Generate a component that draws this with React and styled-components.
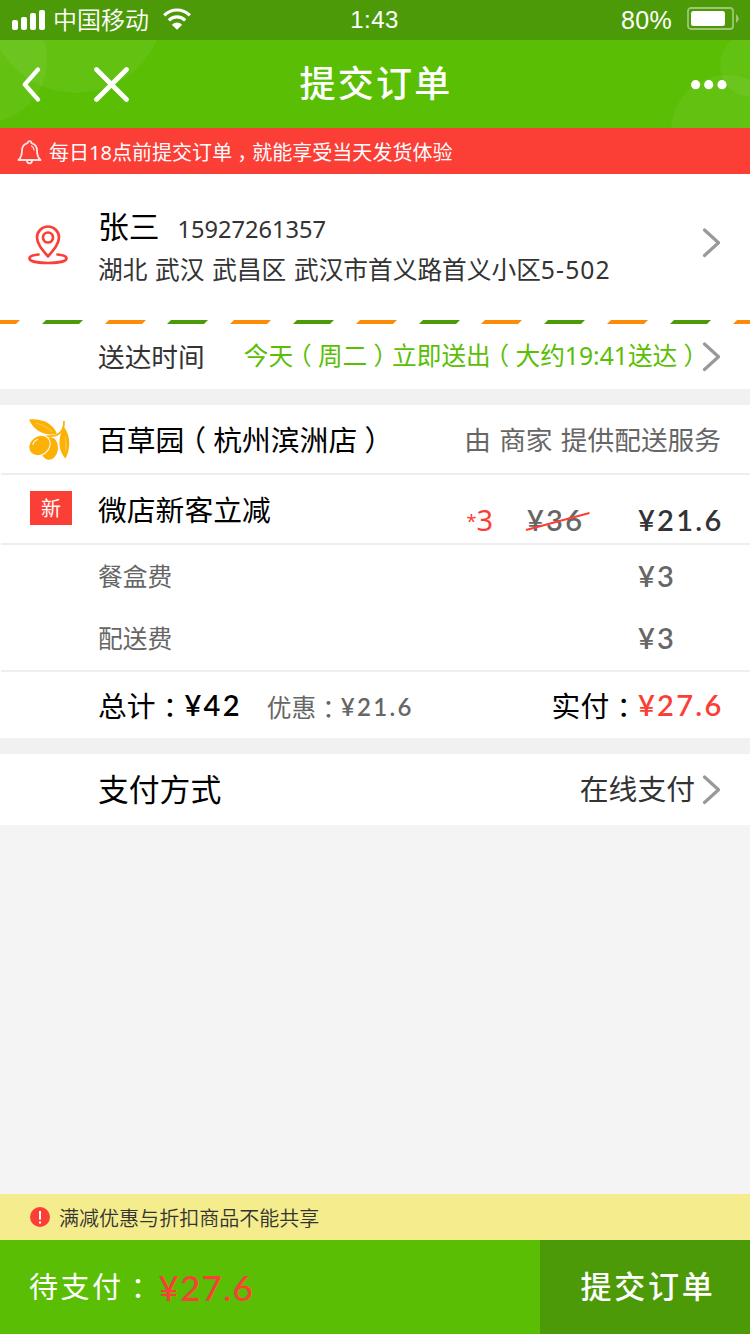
import React from 'react';
import styled, { createGlobalStyle } from 'styled-components';

const GlobalStyle = createGlobalStyle`
  * { box-sizing: border-box; }
  body { margin: 0; background: #f4f4f4; }
`;

const Page = styled.div`
  width: 750px;
  height: 1334px;
  display: flex;
  flex-direction: column;
  background: #f4f4f4;
  color: #333;
  font-family: "Noto Sans", "Noto Sans CJK SC", sans-serif;
  line-height: 1;
  white-space: nowrap;
  overflow: hidden;
`;

const StatusBar = styled.div`
  height: 40px;
  flex: none;
  display: grid;
  grid-template-columns: 1fr auto 1fr;
  align-items: center;
  padding: 0 10px 0 12px;
  background: #4d9a09;
  color: #fff;
`;
const Carrier = styled.div`
  display: flex;
  align-items: center;
  font-size: 24px;
  font-weight: 350;
  svg:first-child { margin-right: 8px; }
  svg:last-child { margin: 0 0 2px 14px; }
`;
const Clock = styled.div`
  margin-right: 3px;
  font: 24px/1 "Liberation Sans", sans-serif;
  letter-spacing: 0.4px;
`;
const BatteryInfo = styled.div`
  display: flex;
  justify-content: flex-end;
  align-items: center;
  font: 25px/1 "Liberation Sans", sans-serif;
  letter-spacing: 0.3px;
  span { padding-top: 1px; }
  svg { margin: 0 0 3px 15px; }
`;

const Header = styled.header`
  position: relative;
  height: 88px;
  flex: none;
  display: grid;
  grid-template-columns: 1fr auto 1fr;
  align-items: center;
  padding: 1px 23px 0 22px;
  background: #5abe04;
`;
const Bubbles = styled.svg`
  position: absolute;
  inset: 0;
`;
const NavIcons = styled.div`
  display: flex;
  align-items: center;
  gap: 53px;
`;
const Title = styled.h1`
  margin: 0;
  padding: 0 0 1px 3px;
  color: #fff;
  font-size: 36px;
  font-weight: 500;
  letter-spacing: 2.3px;
`;
const More = styled.svg`
  justify-self: end;
`;

const Notice = styled.div`
  height: 46px;
  flex: none;
  display: flex;
  align-items: center;
  gap: 7px;
  padding: 2px 17px 0;
  background: #fb3e36;
  color: #fff;
  font-size: 20.05px;
  span { padding-top: 1px; }
`;

/* Full-width punctuation set in the middle of its em square */
const Mark = styled.span`
  display: inline-block;
  width: 1em;
  letter-spacing: 0;
  text-align: center;
  font-feature-settings: "halt";
`;

const AddressCard = styled.section`
  height: 146px;
  flex: none;
  display: flex;
  align-items: center;
  padding: 0 29px 8px 28px;
  background: #fff;
`;
const PinIcon = styled.svg`
  margin-top: 4px;
`;
const AddressText = styled.div`
  flex: 1;
  padding: 7px 0 0 30px;
`;
const Recipient = styled.div`
  display: flex;
  align-items: baseline;
  gap: 18px;
  color: #000;
  font-size: 30.8px;
`;
const Phone = styled.span`
  color: #333;
  font-size: 23.6px;
`;
const Address = styled.div`
  margin-top: 16px;
  font-size: 24.7px;
  word-spacing: 1.3px;
`;
const Unit = styled.span`
  letter-spacing: 1.1px;
`;

const Stripes = styled.div`
  height: 4px;
  flex: none;
  display: flex;
  gap: 25.5px;
  background: #fff;
  overflow: hidden;
`;
const Dash = styled.i`
  flex: none;
  width: 37.3px;
  background: ${(p) => (p.$green ? '#4d9a09' : '#fb8b08')};
  transform: skewX(-45deg);
  &:first-child { margin-left: -19px; }
`;

const Row = styled.div`
  height: ${(p) => p.$h}px;
  flex: none;
  display: flex;
  align-items: center;
  padding: ${(p) => p.$top || 0}px 29px 0 98px;
  background: #fff;
`;
const Card = styled.section`
  flex: none;
  display: flex;
  flex-direction: column;
  background: #fff;
`;
const Gap = styled.div`
  height: 16px;
  flex: none;
  background: #f1f1f1;
`;
const Divider = styled.hr`
  height: 2px;
  margin: 0 0 0 1px;
  border: 0;
  background: #eee;
`;
const Label = styled.span`
  flex: ${(p) => (p.$auto ? 'none' : 1)};
  padding-top: ${(p) => p.$drop || 0}px;
  color: ${(p) => p.$color || '#000'};
  font-size: ${(p) => p.$size || 28.8}px;
`;
const Value = styled.span`
  margin-right: ${(p) => p.$gap || 0}px;
  color: ${(p) => p.$color || '#333'};
  font-size: ${(p) => p.$size || 28.8}px;
  word-spacing: 1.4px;
`;
const Leading = styled.div`
  width: 98px;
  margin-left: -98px;
  padding-left: ${(p) => p.$x}px;
  flex: none;
  display: flex;
`;
const Tag = styled.span`
  width: 42px;
  height: 34px;
  display: flex;
  align-items: center;
  justify-content: center;
  margin-bottom: 4px;
  padding-top: 2px;
  background: #fb3e36;
  color: #fff;
  font-size: 20px;
`;
const Price = styled.span`
  width: ${(p) => (p.$col ? '83px' : 'auto')};
  margin-top: ${(p) => p.$shift || 0}px;
  color: ${(p) => p.$color || '#333'};
  font: ${(p) => p.$weight || 600} ${(p) => p.$size || 29}px/1 Lato, sans-serif;
  letter-spacing: ${(p) => p.$ls ?? 2.3}px;
`;
const PromoPrices = styled.div`
  display: flex;
  align-items: center;
  padding-top: 18px;
`;
const Quantity = styled.span`
  display: flex;
  align-items: center;
  margin-right: 34px;
  color: #fb3e36;
  font-size: 29px;
  small { font-size: 18px; padding-top: 3px; }
`;
const OldPrice = styled.span`
  position: relative;
  width: 111px;
  svg { position: absolute; left: -2px; top: 5px; }
`;
const Discount = styled.span`
  flex: 1;
  display: flex;
  align-items: center;
  padding: 4px 0 0 25px;
  color: #666;
  font-size: 24.7px;
`;

const Spacer = styled.div`
  flex: 1;
`;
const Tip = styled.div`
  height: 46px;
  flex: none;
  display: flex;
  align-items: center;
  gap: 9px;
  padding: 0 30px;
  background: #f4ec8d;
  font-size: 20.05px;
  font-weight: 350;
  span { padding-top: 4px; }
`;
const Footer = styled.footer`
  height: 94px;
  flex: none;
  display: flex;
  color: #fff;
`;
const Due = styled.div`
  flex: 1;
  display: flex;
  align-items: center;
  padding-left: 29px;
  background: #5abe04;
`;
const DueLabel = styled.span`
  padding: 0 6px 2px 0;
  font-size: 29px;
  letter-spacing: 2.5px;
`;
const Submit = styled.button`
  width: 210px;
  border: 0;
  padding: 0 0 2px 6px;
  background: #4d9a09;
  color: #fff;
  font: 500 31px/1 "Noto Sans", "Noto Sans CJK SC", sans-serif;
  letter-spacing: 2.8px;
`;

const Arrow = () => (
  <svg width="19" height="30" viewBox="0 0 19 30" fill="none" stroke="#999" strokeWidth="3.2" strokeLinecap="round" strokeLinejoin="round">
    <path d="M2.5 2 16.5 14.8 2.5 27.5" />
  </svg>
);

export default function App() {
  const dashes = Array.from({ length: 13 }, (_, i) => i % 2 === 1);
  return (
    <Page>
      <GlobalStyle />
      <StatusBar>
        <Carrier>
          <svg width="33" height="20" fill="#fff">
            <rect x="0" y="10" width="6" height="10" rx="2" />
            <rect x="9" y="7" width="6" height="13" rx="2" />
            <rect x="18" y="3" width="6" height="17" rx="2" />
            <rect x="27" y="0" width="6" height="20" rx="2" />
          </svg>
          中国移动
          <svg width="28" height="22" viewBox="0 0 28 22" fill="none" stroke="#fff" strokeWidth="3.2">
            <path d="M1.2 7.4C8.5.2 19.5.2 26.8 7.4" />
            <path d="M5.8 12.3C10.5 7.8 17.5 7.8 22.2 12.3" />
            <path d="M14 21.8 8.8 16.8Q14 12.3 19.2 16.8Z" fill="#fff" stroke="none" />
          </svg>
        </Carrier>
        <Clock>1:43</Clock>
        <BatteryInfo>
          <span>80%</span>
          <svg width="53" height="23">
            <rect x="1" y="1" width="45" height="21" rx="3" fill="none" stroke="#fff" strokeOpacity=".45" strokeWidth="1.8" />
            <rect x="4" y="4" width="34" height="15" rx="2.5" fill="#fff" />
            <path d="M49 7q5.5 4.5 0 9z" fill="#fff" fillOpacity=".45" />
          </svg>
        </BatteryInfo>
      </StatusBar>

      <Header>
        <Bubbles width="750" height="88" viewBox="0 40 750 88" fill="#fff" fillOpacity=".06">
          <circle cx="76" cy="5" r="88" />
          <circle cx="-16" cy="60" r="63" />
          <circle cx="752" cy="65" r="32" />
          <circle cx="727" cy="131" r="56" />
        </Bubbles>
        <NavIcons>
          <svg width="19" height="35" viewBox="0 0 19 35" fill="none" stroke="#fff" strokeWidth="4.2" strokeLinecap="round" strokeLinejoin="round">
            <path d="M16 2.5 2.8 17.5 16 32.5" />
          </svg>
          <svg width="35" height="35" viewBox="0 0 35 35" stroke="#fff" strokeWidth="4.7" strokeLinecap="round">
            <path d="M2.5 2.5 32.5 32.5M32.5 2.5 2.5 32.5" />
          </svg>
        </NavIcons>
        <Title>提交订单</Title>
        <More width="36" height="10" fill="#fff">
          <circle cx="4.6" cy="4.7" r="4.6" />
          <circle cx="17.7" cy="4.7" r="4.6" />
          <circle cx="31" cy="4.7" r="4.6" />
        </More>
      </Header>

      <Notice>
        <svg width="25" height="25" viewBox="0 0 25 25" fill="none" stroke="#fff" strokeOpacity=".85" strokeWidth="1.8" strokeLinecap="round" strokeLinejoin="round">
          <path d="M10.5 3.2a2 2 0 0 1 4 0c3.5 1 5.5 3.8 5.5 7.500 0 5 1 6.800 3.500 9.300H1.500C4 17.500 5 15.700 5 10.700 5 7 7 4.200 10.500 3.200z" />
          <path d="M10 20.500a2.500 2.800 0 0 0 5 0" />
          <path d="M14.500 6c1.500.8 2.400 2.200 2.500 4" strokeWidth="1.2" />
        </svg>
        <span>每日18点前提交订单<Mark>，</Mark>就能享受当天发货体验</span>
      </Notice>

      <AddressCard>
        <PinIcon width="40" height="40" viewBox="0 0 40 40" fill="none" stroke="#fb3e36" strokeWidth="2.7" strokeLinecap="round">
          <path d="M20 31.500C14.500 25 9 19 9 12.500a11 11 0 0 1 22 0C31 19 25.500 25 20 31.500z" strokeLinejoin="round" />
          <circle cx="20" cy="12.5" r="5" />
          <path d="M10.500 29.500C5 30 1.500 31.500 1.500 33.500c0 6 37 6 37 0 0-2-3.500-3.500-9-4" />
        </PinIcon>
        <AddressText>
          <Recipient>张三<Phone>15927261357</Phone></Recipient>
          <Address>湖北 武汉 武昌区 武汉市首义路首义小区<Unit>5-502</Unit></Address>
        </AddressText>
        <Arrow />
      </AddressCard>
      <Stripes>
        {dashes.map((green, i) => <Dash key={i} $green={green} />)}
      </Stripes>
      <Row $h={65}>
        <Label $size={26.7} $color="#333" $drop={2}>送达时间</Label>
        <Value $size={24.7} $color="#5abe04">
          今天<Mark>（</Mark>周二<Mark>）</Mark>立即送出<Mark>（</Mark>大约19:41送达<Mark>）</Mark>
        </Value>
        <Arrow />
      </Row>
      <Gap />

      <Card>
        <Row $h={68} $top={2}>
          <Leading $x={28}>
            <svg width="42" height="42" viewBox="0 0 42 42">
              <path d="M1 .5C12-1 25 3.500 29 15 17 17.500 6 12 1 .5z" fill="#fdb005" />
              <path d="M8 4c7 2 12 5 16 8.500" fill="none" stroke="#fff" strokeOpacity=".35" />
              <path d="M36 2c.5 7-2.500 11.500-7 14-3 1.500-8 .8-11 1.500" fill="none" stroke="#fdb005" strokeWidth="1.8" />
              <path d="M36 8c7 9 6.500 22 1.500 31.500C30 32 29.500 18 36 8z" fill="#fdb005" />
              <path d="M37 18c1.300 5 1.200 10 .5 14" fill="none" stroke="#fff" strokeOpacity=".35" />
              <ellipse cx="21.500" cy="29.500" rx="8.500" ry="11.300" fill="#fdb005" transform="rotate(8 21.500 29.500)" />
              <ellipse cx="11.500" cy="26.500" rx="11.300" ry="9.500" fill="#fdb005" stroke="#fff" strokeWidth="1" transform="rotate(-38 11.500 26.500)" />
              <path d="M5 25.500c.5-2.500 2-4 4.500-5" fill="none" stroke="#fff" strokeWidth="1.2" strokeLinecap="round" />
            </svg>
          </Leading>
          <Label>百草园<Mark>（</Mark>杭州滨洲店<Mark>）</Mark></Label>
          <Value $size={26.7} $color="#666">由 商家 提供配送服务</Value>
        </Row>
        <Divider />
        <Row $h={68} $top={2}>
          <Leading $x={30}><Tag>新</Tag></Leading>
          <Label>微店新客立减</Label>
          <PromoPrices>
            <Quantity><small>*</small>3</Quantity>
            <OldPrice>
              <Price $color="#666">¥36</Price>
              <svg width="66" height="22"><path d="M1 20 64.5 3" stroke="#fb3e36" strokeWidth="2" /></svg>
            </OldPrice>
            <Price $col>¥21.6</Price>
          </PromoPrices>
        </Row>
        <Divider />
        <Row $h={63} $top={2}>
          <Label $size={24.7} $color="#666">餐盒费</Label>
          <Price $col $shift={-4} $color="#666">¥3</Price>
        </Row>
        <Row $h={62}>
          <Label $size={24.7} $color="#666">配送费</Label>
          <Price $col $shift={-4} $color="#666">¥3</Price>
        </Row>
        <Divider />
        <Row $h={66} $top={2}>
          <Label $auto>总计<Mark>：</Mark></Label>
          <Price $shift={-4} $color="#000">¥42</Price>
          <Discount>优惠<Mark>：</Mark><Price $shift={-1} $color="#666" $size={24}>¥21.6</Price></Discount>
          <Label $auto>实付<Mark>：</Mark></Label>
          <Price $col $shift={-4} $color="#fb3e36">¥27.6</Price>
        </Row>
      </Card>
      <Gap />
      <Row $h={71}>
        <Label $size={30.8}>支付方式</Label>
        <Value $gap={7}>在线支付</Value>
        <Arrow />
      </Row>

      <Spacer />
      <Tip>
        <svg width="20" height="20">
          <circle cx="10" cy="10" r="10" fill="#fb3e36" />
          <path d="M10 4v8.500M10 14.500v2" stroke="#fff" strokeWidth="2" />
        </svg>
        <span>满减优惠与折扣商品不能共享</span>
      </Tip>
      <Footer>
        <Due>
          <DueLabel>待支付<Mark>：</Mark></DueLabel>
          <Price $color="#fb3e36" $size={35} $weight={500} $ls={1.2}>¥27.6</Price>
        </Due>
        <Submit>提交订单</Submit>
      </Footer>
    </Page>
  );
}
